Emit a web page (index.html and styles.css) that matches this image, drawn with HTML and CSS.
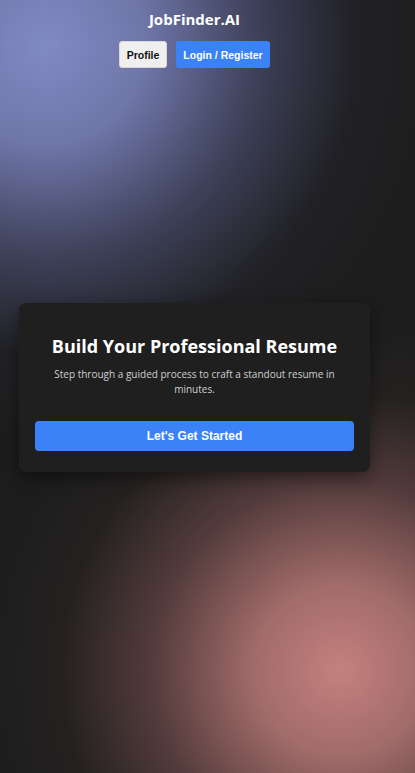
FILE: index.html
```html
<!DOCTYPE html>
<html lang="en">
<head>
<meta charset="utf-8">
<title>JobFinder.AI</title>
<link rel="stylesheet" href="styles.css">
</head>
<body>
<div class="page">
  <header class="header">
    <div class="brand">JobFinder.AI</div>
    <nav class="nav">
      <button class="btn btn-light">Profile</button>
      <button class="btn btn-blue">Login / Register</button>
    </nav>
  </header>
  <main class="main">
    <section class="card">
      <h1 class="title">Build Your Professional Resume</h1>
      <p class="subtitle">Step through a guided process to craft a standout resume in minutes.</p>
      <button class="cta">Let's Get Started</button>
    </section>
  </main>
</div>
</body>
</html>
```

FILE: styles.css
```css
html, body {
  margin: 0;
  padding: 0;
  height: 100%;
}
body {
  background-color: #1d1d1d;
  background-image:
    radial-gradient(circle at 45px 45px, rgba(128,138,196,1) 0px, rgba(120,128,184,0.9) 100px, rgba(84,90,130,0.6) 210px, rgba(44,46,62,0.25) 310px, rgba(29,29,29,0) 390px),
    radial-gradient(circle at 340px 670px, rgba(196,128,126,1) 0px, rgba(180,119,117,0.88) 85px, rgba(124,82,82,0.56) 190px, rgba(62,45,45,0.22) 280px, rgba(29,29,29,0) 355px);
  background-repeat: no-repeat;
  font-family: "Liberation Sans", Arial, sans-serif;
  color: #fff;
}
.page {
  width: 389px;
  height: 773px;
  display: grid;
}
.header, .main {
  grid-area: 1 / 1;
}
.header {
  align-self: start;
  display: flex;
  flex-direction: column;
  align-items: center;
  padding-top: 10px;
  z-index: 1;
}
.brand {
  font-family: "Open Sans", "Noto Sans", sans-serif;
  font-weight: 700;
  font-size: 15px;
  line-height: 18px;
  color: #fff;
}
.nav {
  display: flex;
  gap: 9px;
  margin-top: 13px;
}
.btn {
  font-family: "Liberation Sans", Arial, sans-serif;
  font-weight: 700;
  font-size: 10.5px;
  height: 27px;
  padding: 0;
  border-radius: 3px;
  border: 1px solid transparent;
  white-space: nowrap;
  cursor: pointer;
}
.btn-light {
  background: #efefef;
  color: #111;
  border-color: #d8d8d8;
  width: 48px;
}
.btn-blue {
  background: #3b82f6;
  color: #fff;
  width: 94px;
}
.main {
  display: flex;
  align-items: center;
  justify-content: center;
}
.card {
  width: 351px;
  box-sizing: border-box;
  background: #1f1f1f;
  border-radius: 7px;
  padding: 30px 16px 21px;
  text-align: center;
  box-shadow: 0 6px 18px rgba(0,0,0,0.45);
  margin-top: 2px;
}
.title {
  font-family: "Open Sans", "Noto Sans", sans-serif;
  font-weight: 700;
  font-size: 18px;
  line-height: 26px;
  margin: 0;
  color: #fff;
}
.subtitle {
  font-family: "Open Sans", "Noto Sans", sans-serif;
  font-size: 10px;
  line-height: 15px;
  color: #cfcfcf;
  margin: 8px 16px 0;
}
.cta {
  display: block;
  width: 100%;
  height: 30px;
  margin-top: 24px;
  background: #3b82f6;
  color: #fff;
  font-family: "Liberation Sans", Arial, sans-serif;
  font-weight: 700;
  font-size: 12px;
  border: none;
  border-radius: 4px;
  cursor: pointer;
}
```
